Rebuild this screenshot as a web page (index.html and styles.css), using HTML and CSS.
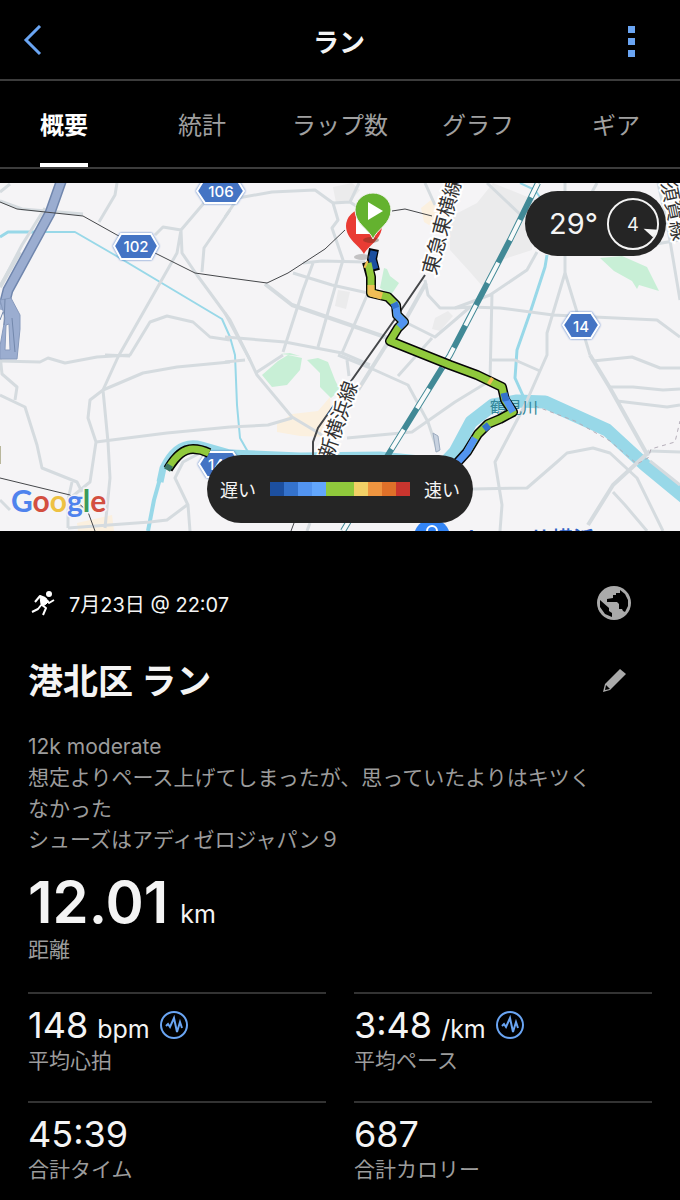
FILE: index.html
```html
<!DOCTYPE html>
<html lang="ja">
<head>
  <meta charset="utf-8">
  <meta name="viewport" content="width=device-width, initial-scale=1">
  <title>ラン</title>
  <link rel="stylesheet" href="styles.css">
</head>
<body>

<header class="topbar">
  <button class="icon-button" type="button" aria-label="戻る">
    <svg width="20" height="32" viewBox="0 0 20 32"><path d="M18 1 4 15l14 14" fill="none" stroke="#6aa5f3" stroke-width="3"/></svg>
  </button>
  <h1 class="title">ラン</h1>
  <button class="icon-button" type="button" aria-label="メニュー">
    <svg width="8" height="32" viewBox="0 0 8 32"><path d="M0 1h7v7H0zM0 13h7v7H0zM0 25h7v7H0z" fill="#6aa5f3"/></svg>
  </button>
</header>

<nav class="tabs">
  <a class="tab active" href="#overview">概要</a>
  <a class="tab" href="#stats">統計</a>
  <a class="tab" href="#laps">ラップ数</a>
  <a class="tab" href="#charts">グラフ</a>
  <a class="tab" href="#gear">ギア</a>
</nav>

<section class="map">
  <svg class="map-canvas" viewBox="0 183 680 348" preserveAspectRatio="xMidYMid slice" role="img" aria-label="コースマップ">
    <!-- areas -->
    <path class="block" d="M450 217 477 203 493 183 535 200 532 250 495 262 483 287 470 272 450 250zM333 187 352 183 360 190 350 202 336 203zM338 290 350 292 346 309 335 306zM435 318 448 311 453 316 440 331 432 329z"/>
    <path class="town" d="M277 424 292 414 318 411 330 397 332 425 325 437 300 436 277 432zM77 523 112 515 114 531H78zM421 208 431 200 439 210 434 228 424 222z"/>
    <path class="park" d="M384 268 387 269 390 276 399 283 391 295 380 288zM600 258 622 256 647 267 659 291 639 285 637 289 632 281 614 271zM262 375 278 361 288 355 302 358 300 370 287 385 272 387zM307 360 318 358 328 362 335 380 340 390 331 398 320 387 320 373zM280 354 290 353 300 356z"/>

    <!-- water -->
    <path class="river" stroke-width="3" d="M0 237 8 232 37 232"/>
    <path class="river" stroke-width="2" d="M20 232 75 232 113 254 160 282 222 319 230 337 235 355 237 405 240 438 248 452"/>
    <path class="river" stroke-width="2" d="M520 183 535 190 550 212"/>
    <path class="river" stroke-width="3" d="M547 255 545 267 530 313 517 350 515 378 524 398"/>
    <path class="river" stroke-width="4" d="M148 531 154 500 163 468"/>
    <path class="river" stroke-width="7" d="M160 482 163 468C172 449 184 440 202 445L230 453 300 456 380 455 450 462"/>
    <path class="river" stroke-width="13" d="M440 468 455 452 471 422 493 405 517 401 545 402 607 430 645 465 690 502"/>

    <!-- roads -->
    <g class="road">
      <path d="M0 192 10 184M117 183 115 195 99 222M0 201 22 209 83 214M45 208 22 245 0 287"/>
      <path d="M155 235 163 227 181 230 204 203M181 230 182 253 197 275 230 320 250 360M230 210 204 248 202 272M181 230 177 253 118 357 103 390"/>
      <path d="M230 340 210 337 193 322 167 316 150 322 130 355 97 357 65 363 48 358 40 362 0 361M225 217 238 198 272 192 315 190 333 203 338 220 332 228 343 260 340 270 318 347"/>
      <path d="M333 203 350 202 370 215M359 183 350 202M303 263 322 261 365 262M313 263 303 290 283 352M293 273 332 285 368 293 342 353M225 337 285 342 342 353 370 365"/>
      <path d="M225 313 250 360 257 375 292 417 322 435M257 372 283 355M225 362 245 360M230 427 268 425 292 418M338 355 368 367 408 385 428 422 438 452M347 360 349 376"/>
      <path d="M347 438 412 432 455 402 491 380M425 280 428 295 440 308 455 308 470 307 500 308 553 315 657 320 680 337M407 323 435 337 455 320 470 307M425 183 435 205M398 376 432 338"/>
      <path d="M487 183 523 217M537 252 527 270 490 295 455 308M492 293 490 381M492 360 515 360 540 371M565 183V273L547 333 547 355 525 405 495 462 502 505 500 531"/>
      <path d="M565 273 577 312 590 355M597 183 592 192M658 183 667 223 680 300M650 245 680 240M593 361 632 357 660 368H680M610 387H633L663 390 680 389M617 401 667 407 680 405"/>
      <path d="M473 489 527 488 557 462 567 453 593 448 610 453 637 478 663 531M650 451 680 452M613 492 625 505 647 531M650 461 680 485"/>
      <path d="M0 355 2 374 17 387 15 400M0 395 25 407 37 445 42 468 77 482 82 492M103 390 108 442 110 478 105 528M103 390 143 373 177 367 230 362M103 390 90 400 88 418 96 442 90 482 68 500V528"/>
      <path d="M96 442 167 433 230 427M68 528 150 522 167 520 187 505M190 531 188 505 175 478 183 462 200 453M0 500 10 510M105 355 130 356M72 482 68 500 82 508M310 523 307 531"/>
      <path class="wide" d="M265 284 292 305 388 338M426 283 407 317 385 347 358 390M588 525 613 485 650 451M590 355 610 388 648 456M0 287 20 252"/>
    </g>
    <path class="highway-edge" d="M62 179 50 213 20 268 8 290 3 310"/>
    <path class="highway" d="M62 179 50 213 20 268 8 290 3 310"/>
    <path class="junction" d="M0 300 11 298 20 315V329L17 359H0V346L5 318zM6 325 5 350 10 350 9 324z"/>
    <path d="M5 299 4 325M12 318 15 352M0 320 3 312" fill="none" stroke="#7388ac"/>
    <path d="M433 433 438 436 440 450 436 452z" fill="#c8d2e0" stroke="#9dacc0"/>

    <!-- railways -->
    <path class="rail" d="M0 202 17 209 83 216 117 235 157 254 195 273 230 278 267 283 288 273 325 249 345 230M392 211 405 209 432 216M0 478 70 495 88 512 95 531M294 523 291 531"/>
    <path class="rail main" d="M425 275 395 319 349 384 332 408 318 428 313 442V455"/>
    <path class="bullet-line" d="M538 183 510 240 450 355 388 455 343 531"/>
    <path class="bullet-dash" d="M538 183 510 240 450 355 388 455 343 531"/>
    <path class="trail" d="M535 406 575 421 610 441 637 464 648 458 651 449 675 442 680 421"/>

    <!-- place names -->
    <text class="rail-name" transform="translate(436 276) rotate(-75)">東急東横線</text>
    <text class="rail-name" transform="translate(332 460) rotate(-71)">新横浜線</text>
    <text class="rail-name" transform="translate(661 183) rotate(78)">須賀線</text>
    <text class="river-name" x="490" y="413">鶴見川</text>
    <text class="town-name" x="155" y="549">港北区</text>
    <text class="shop-name" x="463" y="547">トレッサ横浜</text>
    <circle cx="432" cy="537" r="18" fill="#3385f5"/>
    <path d="M427 535v-4a5 5 0 0 1 10 0v4" fill="none" stroke="#fff" stroke-width="2"/>

    <!-- road shields -->
    <g class="shield">
      <path d="M205 178h31l8 13-8 12h-31l-8-12z"/><text x="221" y="197">106</text>
      <path d="M121 234h30l7 12-7 13h-30l-7-13z"/><text x="136" y="252">102</text>
      <path d="M571 313h20l8 12-8 13h-20l-8-13z"/><text x="581" y="332">14</text>
      <path d="M207 452h26l8 12-8 13h-26l-8-13z"/><text x="221" y="470">140</text>
    </g>

    <!-- recorded track -->
    <g class="track">
      <path class="outline" d="M374 249 372 259 375 271M367 262 371 277 371 293 388 297 396 305 397 315 404 322 398 328 390 341 425 355 450 365 477 375 502 387 505 400 513 412 500 419 488 424 478 434 467 452 457 463M168 469C176 456 183 449 193 449Q201 449 209 453"/>
      <path stroke="#1c4f9f" d="M374 251 372 259 375 269"/>
      <path stroke="#90c93c" d="M368 263 371 277 371 293 388 297 396 305 397 315 404 322 398 328 390 341 425 355 450 365 477 375 502 387 505 400 513 412 500 419 488 424 478 434 467 452"/>
      <path stroke="#f0bd56" d="M371 285 371 293 382 296M365 264 367 265M489 380 492 382"/>
      <path stroke="#5294f0" d="M394 303 396 306 397 315 404 322 399 327M505 398 513 412M475 438 467 452 458 462"/>
      <path stroke="#3472cc" d="M394 303 396 308M504 393 506 401M484 429 489 425"/>
      <path stroke="#90c93c" d="M169 467C176 456 183 449 193 449Q201 449 209 453"/>
      <path stroke="#3b7562" d="M167 470 170 465"/>
    </g>

    <!-- finish and start pins -->
    <ellipse cx="362" cy="257" rx="8" ry="3" fill="#777" opacity=".4"/>
    <path d="M364 254c-4-8-18-15-18-28a18 17 0 0 1 36 0c0 13-14 20-18 28z" fill="#e93c34"/>
    <path d="M356 217h15v17h-15z" fill="#fff"/>
    <ellipse cx="371" cy="240" rx="8" ry="3" fill="#4a3020" opacity=".35"/>
    <path d="M373 239c-4-10-18-15-18-29a18 17 0 0 1 36 0c0 14-14 19-18 29z" fill="#64b22f" stroke="#f4f3f4"/>
    <path d="M368 202v18l15-9z" fill="#fff"/>

    <path d="M0 446v18" stroke="#b9b79c" stroke-width="2"/>
    <text class="google" x="11" y="512"><tspan fill="#4f83ed">G</tspan><tspan fill="#d34f40">o</tspan><tspan fill="#eec143">o</tspan><tspan fill="#4f83ed">g</tspan><tspan fill="#3c9b58">l</tspan><tspan fill="#d34f40">e</tspan></text>
  </svg>

  <div class="weather">
    <span class="temperature">29°</span>
    <svg width="54" height="54" viewBox="0 0 56 56" role="img" aria-label="風速 4">
      <circle cx="28" cy="28" r="26" fill="none" stroke="#f4f4f4" stroke-width="2"/>
      <path d="M39 33 54 34 49 42z" fill="#f4f4f4"/>
      <text class="wind" x="28" y="35">4</text>
    </svg>
  </div>

  <div class="legend">
    <span>遅い</span>
    <div class="scale">
      <i class="s1"></i><i class="s2"></i><i class="s3"></i><i class="s4"></i><i class="s5"></i>
      <i class="s5"></i><i class="s6"></i><i class="s7"></i><i class="s8"></i><i class="s9"></i>
    </div>
    <span>速い</span>
  </div>
</section>

<main class="summary" id="overview">
  <div class="line">
    <div class="date">
      <svg width="25" height="26" viewBox="0 0 25 26" fill="none" stroke="#fff" stroke-linejoin="round">
        <circle cx="18" cy="4" r="3" fill="#fff" stroke="none"/>
        <path d="M9 7 15 8 17 12 15 14 12 16 10 14z" fill="#fff"/>
        <path d="M14 8 9 6 4 12M16 10 18 13 23 10" stroke-width="2"/>
        <path d="M11 14 7 19 1 22M11 15 15 18 12 25" stroke-width="2"/>
      </svg>
      <span>7月23日 @ 22:07</span>
    </div>
    <button class="icon-button" type="button" aria-label="公開範囲">
      <svg width="36" height="36" viewBox="0 0 36 36">
        <circle cx="18" cy="18" r="17" fill="#aaa"/>
        <path d="M24 5 29 9 32 15 32 21 29 27 27 26 26 24H23V19L21 17H11V14L17 13V10H20V8H24zM4 15 13 23V26L16 28V32L9 29 4 22z" fill="#000"/>
      </svg>
    </button>
  </div>

  <div class="line name-line">
    <h2 class="name">港北区 ラン</h2>
    <button class="icon-button" type="button" aria-label="編集">
      <svg width="36" height="36" viewBox="0 0 36 36">
        <path d="M24 6 30 11 14 27 7 29 9 21z" fill="#aaa"/>
        <path d="M10 22 14 26 9 27z" fill="#000"/>
      </svg>
    </button>
  </div>

  <p class="note">12k moderate<br>想定よりペース上げてしまったが、思っていたよりはキツくなかった<br>シューズはアディゼロジャパン９</p>

  <div class="distance">
    <div class="value">12.01 <span class="unit">km</span></div>
    <div class="label">距離</div>
  </div>

  <div class="stats">
    <div class="stat">
      <div class="value">148 <span class="unit">bpm</span>
        <button class="icon-button" type="button" aria-label="心拍グラフ">
          <svg width="30" height="30" viewBox="0 0 30 30" fill="none" stroke="#6aa5f3">
            <circle cx="15" cy="15" r="13" stroke-width="2"/>
            <path d="M7 16 9 14 11 17 15 8 18 22 21 12 23 18" stroke-width="2"/>
          </svg>
        </button>
      </div>
      <div class="label">平均心拍</div>
    </div>
    <div class="stat">
      <div class="value">3:48 <span class="unit">/km</span>
        <button class="icon-button" type="button" aria-label="ペースグラフ">
          <svg width="30" height="30" viewBox="0 0 30 30" fill="none" stroke="#6aa5f3">
            <circle cx="15" cy="15" r="13" stroke-width="2"/>
            <path d="M7 16 9 14 11 17 15 8 18 22 21 12 23 18" stroke-width="2"/>
          </svg>
        </button>
      </div>
      <div class="label">平均ペース</div>
    </div>
    <div class="stat">
      <div class="value">45:39</div>
      <div class="label">合計タイム</div>
    </div>
    <div class="stat">
      <div class="value">687</div>
      <div class="label">合計カロリー</div>
    </div>
  </div>
</main>

</body>
</html>
```
FILE: styles.css
```css
* {
  box-sizing: border-box;
}

body {
  margin: 0;
  overflow-x: hidden;
  background: #000;
  color: #f4f4f4;
  font-family: Inter, "Noto Sans CJK JP", sans-serif;
}

h1, h2, p {
  margin: 0;
}

svg {
  display: block;
}

.icon-button {
  display: flex;
  padding: 0;
  border: 0;
  background: none;
  cursor: pointer;
}

/* header */
.topbar {
  display: flex;
  align-items: center;
  justify-content: space-between;
  height: 81px;
  padding: 2px 44px 0 22px;
  border-bottom: 2px solid #3c3c3c;
}

.title {
  margin-left: 8px;
  font-size: 26px;
  font-weight: 700;
}

.tabs {
  display: grid;
  grid-template-columns: repeat(5, 1fr);
  justify-items: center;
  height: 88px;
  margin: 0 -5px;
  border-bottom: 2px solid #3c3c3c;
}

.tab {
  height: 86px;
  border-bottom: 4px solid transparent;
  color: #a0a0a0;
  font-size: 24px;
  line-height: 90px;
  text-decoration: none;
}

.tab.active {
  border-color: #fff;
  color: #fff;
  font-weight: 700;
}

/* map */
.map {
  position: relative;
  margin-top: 14px;
  background: #f5f4f6;
}

.map-canvas {
  width: 100%;
}

.block { fill: #ebebec; }
.town { fill: #fbf0df; }
.park { fill: #c8efd6; }

.river {
  fill: none;
  stroke: #98d8e8;
  stroke-linejoin: round;
}

.road {
  fill: none;
  stroke: #d5dbdf;
  stroke-width: 3;
  stroke-linejoin: round;
}

.road .wide {
  stroke-width: 4;
}

.highway-edge, .highway {
  fill: none;
  stroke: #7086ad;
  stroke-width: 11;
}

.highway {
  stroke: #9badd0;
  stroke-width: 8;
}

.junction {
  fill: #9badd0;
  fill-rule: evenodd;
  stroke: #879abd;
}

.rail {
  fill: none;
  stroke: #45474a;
}

.rail.main {
  stroke-width: 2;
}

.bullet-line, .bullet-dash {
  fill: none;
  stroke: #418996;
  stroke-width: 6;
}

.bullet-dash {
  stroke: #f8fafa;
  stroke-width: 4;
  stroke-dasharray: 23 25;
  stroke-dashoffset: 7;
}

.trail {
  fill: none;
  stroke: #b5aeb9;
  stroke-dasharray: 4;
}

.rail-name {
  fill: #333;
  stroke: #fff;
  stroke-width: 4;
  paint-order: stroke;
  font-size: 20px;
}

.river-name {
  fill: #34889a;
  font-size: 16px;
}

.town-name {
  fill: #222;
  font-size: 21px;
  font-weight: 500;
}

.shop-name {
  fill: #2d60c3;
  font-size: 22px;
  font-weight: 500;
}

.shield path {
  fill: #4474c4;
  stroke: #fff;
  stroke-width: 2;
  filter: drop-shadow(0 0 1px #4474c4);
}

.shield text {
  fill: #fff;
  font-size: 15px;
  font-weight: 500;
  text-anchor: middle;
}

.track path {
  fill: none;
  stroke-width: 7;
  stroke-linejoin: round;
}

.track .outline {
  stroke: #050505;
  stroke-width: 10;
}

.google {
  stroke: #f5f4f6;
  stroke-width: 3;
  paint-order: stroke;
  font-family: Lato, sans-serif;
  font-size: 30px;
  font-weight: 700;
}

.weather, .legend {
  position: absolute;
  display: flex;
  align-items: center;
  border-radius: 34px;
  background: #252525;
}

.weather {
  top: 8px;
  right: 14px;
  gap: 8px;
  height: 65px;
  padding: 0 6px 0 24px;
}

.temperature {
  font-size: 29px;
}

.wind {
  fill: #f4f4f4;
  font-size: 19px;
  text-anchor: middle;
}

.legend {
  bottom: 8px;
  left: 50%;
  gap: 14px;
  height: 68px;
  padding: 0 13px;
  font-size: 18px;
  white-space: nowrap;
  transform: translateX(-50%);
}

.scale {
  display: flex;
}

.scale i {
  width: 14px;
  height: 14px;
}

.s1 { background: #1c4f9f; }
.s2 { background: #3472cc; }
.s3 { background: #5294f0; }
.s4 { background: #62a6fc; }
.s5 { background: #90c93c; }
.s6 { background: #f2d066; }
.s7 { background: #ee9540; }
.s8 { background: #df7029; }
.s9 { background: #c9352e; }

/* activity summary */
.summary {
  padding: 54px 28px 0;
}

.line {
  display: flex;
  align-items: center;
  justify-content: space-between;
  padding-right: 20px;
}

.date {
  display: flex;
  align-items: center;
  gap: 13px;
  padding-left: 3px;
  font-size: 20px;
}

.name-line {
  margin-top: 36px;
}

.name {
  font-size: 35px;
  font-weight: 700;
  line-height: 48px;
}

.note {
  margin-top: 26px;
  padding-right: 48px;
  color: #9c9c9c;
  font-size: 21px;
  line-height: 31px;
}

.value {
  display: flex;
  align-items: baseline;
  gap: 9px;
  font-size: 36px;
  line-height: 44px;
}

.value .icon-button {
  align-self: center;
}

.unit {
  font-size: 25px;
  line-height: 1;
}

.label {
  color: #9c9c9c;
  font-size: 21px;
  line-height: 28px;
}

.distance {
  margin-top: 13px;
}

.distance .value {
  gap: 12px;
  font-size: 58px;
  font-weight: 600;
  line-height: 68px;
}

.distance .unit {
  font-weight: 400;
  line-height: 1;
}

.stats {
  display: grid;
  grid-template-columns: 1fr 1fr;
  column-gap: 28px;
  margin-top: 28px;
}

.stat {
  height: 109px;
  padding-top: 9px;
  border-top: 2px solid #333;
}

/* nothing follows the last row */
.stat:nth-last-child(-n+2) {
  height: 90px;
}
```
